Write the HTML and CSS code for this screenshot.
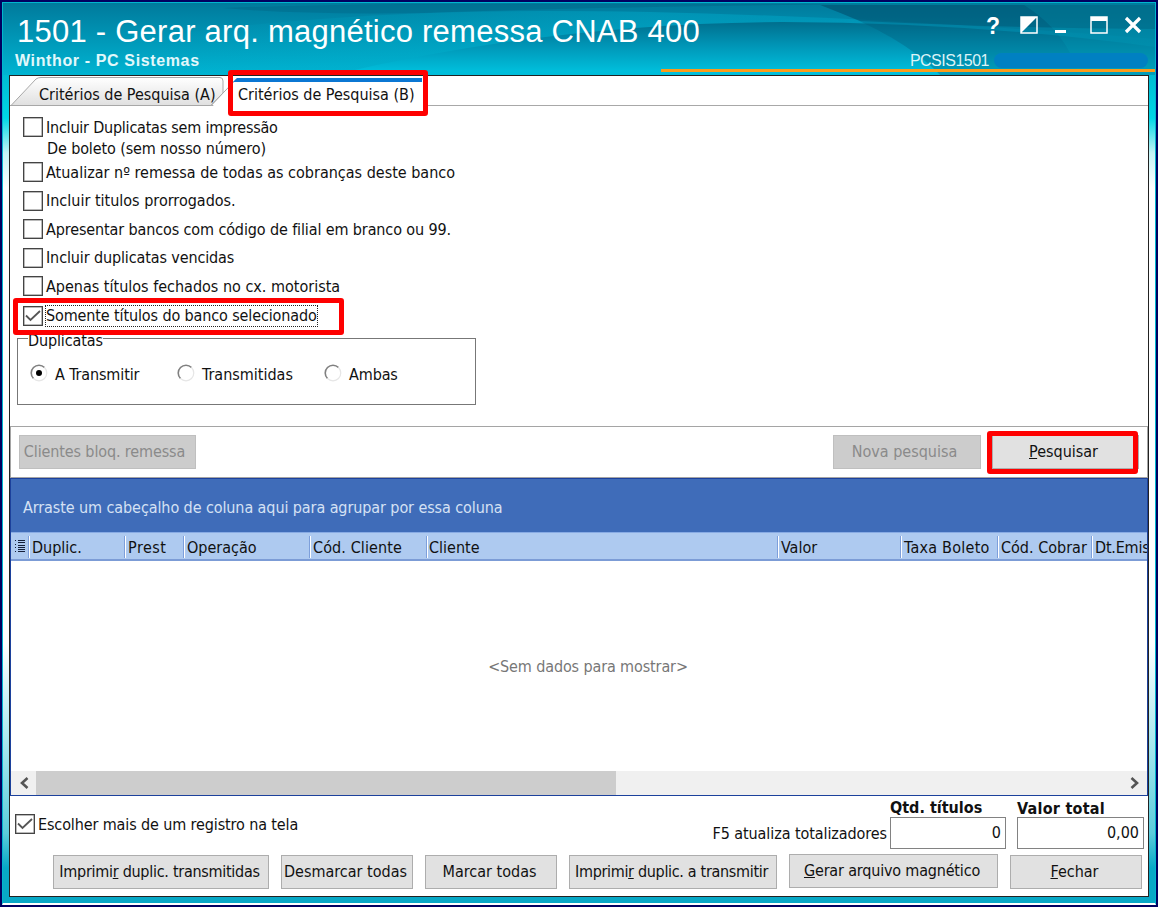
FILE: index.html
```html
<!DOCTYPE html>
<html lang="pt-BR">
<head>
  <meta charset="utf-8">
  <title>1501 - Gerar arq. magnético remessa CNAB 400</title>
  <link rel="stylesheet" href="styles.css">
</head>
<body>
  <div class="window">
    <header class="titlebar">
      <svg class="waves" width="1153" height="72" viewBox="0 0 1153 72" preserveAspectRatio="none">
        <defs>
          <linearGradient id="sky" x1="0" y1="0" x2="0" y2="1">
            <stop offset="0" stop-color="#007a9c"/>
            <stop offset="1" stop-color="#00b4d2"/>
          </linearGradient>
          <linearGradient id="shade" gradientUnits="userSpaceOnUse" x1="0" y1="18" x2="0" y2="68">
            <stop offset="0" stop-color="#006d8c"/>
            <stop offset="0.500" stop-color="#0096b7"/>
            <stop offset="1" stop-color="#00bedb"/>
          </linearGradient>
          <linearGradient id="fade" x1="0" y1="0" x2="1" y2="0">
            <stop offset="0" stop-color="#00bcd8" stop-opacity="0"/>
            <stop offset="0.500" stop-color="#00b0d0" stop-opacity="0.400"/>
            <stop offset="1" stop-color="#00a2c6" stop-opacity="0.400"/>
          </linearGradient>
        </defs>
        <rect width="1153" height="72" fill="url(#sky)"/>
        <path d="M220 5Q300 2 400 1H880Q620 3 420 10Q300 12 220 5Z" fill="#006485" opacity="0.400"/>
        <path d="M150 34Q330 8 540 8Q800 8 1153 36V72H150Z" fill="url(#fade)"/>
        <path d="M330 72Q550 20 780 19Q980 20 1153 44V72Z" fill="url(#shade)"/>
        <path d="M818 2H1153V72H938Q900 32 818 2Z" fill="#005b7c" opacity="0.350"/>
        <path d="M818 2H1153V26Q1000 25 858 18Z" fill="#004460" opacity="0.350"/>
        <path d="M1022 2Q1066 30 1076 72H1153V2Z" fill="#00a4c0" opacity="0.200"/>
      </svg>
      <div class="titles">
        <h1>1501 - Gerar arq. magnético remessa CNAB 400</h1>
        <h2>Winthor - PC Sistemas</h2>
      </div>
      <div class="title-right">
        <div class="win-buttons">
          <span class="help">?</span>
          <svg class="w-theme" width="18" height="18" viewBox="0 0 18 18"><path d="M1 1H17V17H1Z" fill="none" stroke="#fff" stroke-width="1.500"/><path d="M1 1H17L1 17Z" fill="#fff"/></svg>
          <svg class="w-min" width="12" height="18" viewBox="0 0 12 18"><path d="M0 14H11V17H0Z" fill="#fff"/></svg>
          <svg class="w-max" width="18" height="18" viewBox="0 0 18 18"><path d="M1 1H17V17H1Z" fill="none" stroke="#fff" stroke-width="1.500"/><path d="M1 1H17V5H1Z" fill="#fff"/></svg>
          <svg class="w-close" width="18" height="18" viewBox="0 0 18 18"><path d="M2 2L16 16M16 2L2 16" stroke="#fff" stroke-width="3.200"/></svg>
        </div>
        <div class="session">PCSIS1501<span class="redacted"></span></div>
      </div>
    </header>
    <div class="orange-line"></div>

    <main class="panel">
      <div class="tabs">
        <svg class="tab-art" width="420" height="30" viewBox="0 0 420 30">
          <defs>
            <linearGradient id="tab" x1="0" y1="0" x2="0" y2="1">
              <stop offset="0" stop-color="#ffffff"/>
              <stop offset="1" stop-color="#e0e0e0"/>
            </linearGradient>
          </defs>
          <path d="M1 28.500L26 2Q28 .5 31 .5H210Q213 .5 213 4V16L201 28.500Z" fill="url(#tab)" stroke="#a8a8a8"/>
          <path d="M202 30L227 1.500H413V30" fill="#fff"/>
          <path d="M201 28.500L227 1.500M413.500 2V29" fill="none" stroke="#a8a8a8"/>
          <path d="M227 1H412V5H223Z" fill="#0b77d3"/>
        </svg>
        <span class="tab tab-a">Critérios de Pesquisa (A)</span>
        <span class="tab tab-b">Critérios de Pesquisa (B)</span>
      </div>

      <section class="options">
        <label class="check first"><i class="box"></i><span class="tighter">Incluir Duplicatas sem impressão</span></label>
        <div class="second-line tight">De boleto (sem nosso número)</div>
        <label class="check"><i class="box"></i><span>Atualizar nº remessa de todas as cobranças deste banco</span></label>
        <label class="check"><i class="box"></i><span>Incluir titulos prorrogados.</span></label>
        <label class="check"><i class="box"></i><span class="tight">Apresentar bancos com código de filial em branco ou 99.</span></label>
        <label class="check"><i class="box"></i><span class="tight">Incluir duplicatas vencidas</span></label>
        <label class="check"><i class="box"></i><span>Apenas títulos fechados no cx. motorista</span></label>
        <label class="check last"><i class="box"><svg width="18" height="18" viewBox="0 0 18 18"><path d="M2 8.500L6.500 13L16 4" fill="none" stroke="#555" stroke-width="1.800"/></svg></i><span class="focused tight">Somente títulos do banco selecionado</span></label>
        <div class="group">
          <span class="legend tight">Duplicatas</span>
          <label class="radio tight"><svg width="18" height="18" viewBox="0 0 18 18"><path d="M3.500 14.500A7.500 7.500 0 0 1 14.500 3.500" fill="none" stroke="#808080" stroke-width="1.600"/><path d="M14.500 3.500A7.500 7.500 0 0 1 3.500 14.500" fill="none" stroke="#e6e6e6" stroke-width="1.200"/><circle cx="9" cy="9" r="3" fill="#000"/></svg>A Transmitir</label>
          <label class="radio"><svg width="18" height="18" viewBox="0 0 18 18"><path d="M3.500 14.500A7.500 7.500 0 0 1 14.500 3.500" fill="none" stroke="#808080" stroke-width="1.600"/><path d="M14.500 3.500A7.500 7.500 0 0 1 3.500 14.500" fill="none" stroke="#e6e6e6" stroke-width="1.200"/></svg>Transmitidas</label>
          <label class="radio tight"><svg width="18" height="18" viewBox="0 0 18 18"><path d="M3.500 14.500A7.500 7.500 0 0 1 14.500 3.500" fill="none" stroke="#808080" stroke-width="1.600"/><path d="M14.500 3.500A7.500 7.500 0 0 1 3.500 14.500" fill="none" stroke="#e6e6e6" stroke-width="1.200"/></svg>Ambas</label>
        </div>
      </section>

      <section class="toolbar">
        <button class="btn blocked tight" disabled>Clientes bloq. remessa</button>
        <button class="btn new-search" disabled>Nova pesquisa</button>
        <button class="btn search"><u>P</u>esquisar</button>
      </section>

      <section class="grid">
        <div class="group-by">Arraste um cabeçalho de coluna aqui para agrupar por essa coluna</div>
        <div class="columns">
          <span class="picker"><svg width="10" height="14" viewBox="0 0 10 14" shape-rendering="crispEdges"><path d="M0 1.500H1M0 5.500H1M0 8.500H1M0 12.500H1M3 1.500H10M3 3.500H10M3 6.500H10M3 8.500H10M3 10.500H10M3 12.500H10" stroke="#16203a"/></svg></span>
          <span class="col c-duplic">Duplic.</span>
          <span class="col c-prest">Prest</span>
          <span class="col c-oper">Operação</span>
          <span class="col c-cod">Cód. Cliente</span>
          <span class="col c-cliente">Cliente</span>
          <span class="col c-valor">Valor</span>
          <span class="col c-taxa">Taxa Boleto</span>
          <span class="col c-cobr">Cód. Cobrar</span>
          <span class="col c-dt">Dt.Emis</span>
        </div>
        <div class="no-data tight">&lt;Sem dados para mostrar&gt;</div>
        <div class="scrollbar">
          <span class="arrow"><svg width="10" height="12" viewBox="0 0 10 12"><path d="M8.500 1L3 6L8.500 11" fill="none" stroke="#555" stroke-width="2.600"/></svg></span>
          <span class="thumb"></span>
          <span class="arrow right"><svg width="10" height="12" viewBox="0 0 10 12"><path d="M1.500 1L7 6L1.500 11" fill="none" stroke="#555" stroke-width="2.600"/></svg></span>
        </div>
      </section>

      <footer class="footer">
        <div class="totals">
          <label class="check multi"><i class="box"><svg width="18" height="18" viewBox="0 0 18 18"><path d="M2 8.500L6.500 13L16 4" fill="none" stroke="#555" stroke-width="1.800"/></svg></i><span class="tight">Escolher mais de um registro na tela</span></label>
          <span class="f5">F5 atualiza totalizadores</span>
          <div class="total qty"><b>Qtd. títulos</b><div class="field">0</div></div>
          <div class="total value"><b>Valor total</b><div class="field">0,00</div></div>
        </div>
        <div class="actions">
          <button class="btn print-sent">Imprimi<u>r</u> duplic. transmitidas</button>
          <button class="btn unmark">Desmarcar todas</button>
          <button class="btn mark-all">Marcar todas</button>
          <button class="btn print-pending">Imprimi<u>r</u> duplic. a transmitir</button>
          <button class="btn generate"><u>G</u>erar arquivo magnético</button>
          <button class="btn close"><u>F</u>echar</button>
        </div>
      </footer>
    </main>
  </div>

  <div class="mark mark-tab"></div>
  <div class="mark mark-check"></div>
  <div class="mark mark-search"></div>
</body>
</html>
```
FILE: styles.css
```css
* {
  box-sizing: border-box;
}

body {
  margin: 0;
  padding: 2px;
  width: 1158px;
  height: 907px;
  overflow: hidden;
  background: #000060;
  color: #111;
  font-family: "DejaVu Sans Condensed", "DejaVu Sans", Tahoma, sans-serif;
  font-stretch: condensed;
  font-size: 16px;
}

.window {
  position: relative;
  height: 903px;
  background: linear-gradient(#00b9d2 70px, #00d6e6 115px, #c4f4f7 150px, #fff 185px, #fff 640px, #a8e8ef 740px, #5cccdc 830px, #08a8c6 865px);
  border: 1px solid #00b6cf;
  border-bottom: 2px solid #fff;
}

.tight {
  letter-spacing: -0.12px;
}

.tighter {
  letter-spacing: -0.22px;
}

/* Title bar */
.titlebar {
  position: relative;
  display: flex;
  justify-content: space-between;
  height: 72px;
  color: #fff;
  font-family: "Liberation Sans", Arial, sans-serif;
  font-stretch: normal;
}

.waves {
  position: absolute;
  left: 0;
  top: 0;
  width: 100%;
  height: 72px;
}

.titles,
.title-right {
  position: relative;
}

h1 {
  margin: 11px 0 0 14px;
  font-size: 31px;
  line-height: 36px;
  font-weight: 400;
  letter-spacing: 0.25px;
  white-space: nowrap;
}

h2 {
  margin: 2px 0 0 12px;
  font-size: 16px;
  line-height: 18px;
  letter-spacing: 0.63px;
  color: #e2f8fb;
}

.win-buttons {
  display: flex;
  justify-content: flex-end;
  height: 20px;
  margin: 13px 13px 0 0;
}

.help {
  font-size: 23px;
  line-height: 20px;
  font-weight: 700;
}

.w-theme { margin-left: 20px; }
.w-min { margin-left: 17px; }
.w-max { margin-left: 23px; }
.w-close { margin-left: 16px; }

.session {
  display: flex;
  align-items: center;
  justify-content: flex-end;
  margin: 16px 7px 0 0;
  font-size: 16px;
  line-height: 18px;
  letter-spacing: -0.5px;
  color: #dcf3f7;
}

.redacted {
  width: 154px;
  height: 15px;
  margin: -2px 0 0 5px;
  border-radius: 8px;
  background: #0080c2;
}

.orange-line {
  position: absolute;
  left: 658px;
  right: 0;
  top: 66px;
  height: 3px;
  background: #fb9b1a;
}

.panel {
  display: flex;
  flex-direction: column;
  height: 822px;
  margin: 0 6px 0 6px;
  border: 1px solid #222;
  background: #fff;
}

.panel > * {
  flex: none;
}

/* Tabs */
.tabs {
  position: relative;
  height: 30px;
  border-bottom: 1px solid #a8a8a8;
}

.tab-art {
  position: absolute;
  left: 0;
  top: 1px;
}

.tab {
  position: absolute;
  top: 9px;
  line-height: 20px;
  white-space: nowrap;
}

.tab-a { left: 29px; }
.tab-b { left: 228px; }

/* Search options */
.options {
  height: 320px;
  padding: 11px 0 0 13px;
}

.check {
  display: flex;
  align-items: center;
  height: 28.5px;
  white-space: nowrap;
}

.check.first { height: 20px; }
.check.last { height: 31px; }

.second-line {
  height: 21px;
  padding-left: 24px;
  line-height: 23px;
}

.box {
  width: 20px;
  height: 20px;
  margin-right: 3px;
  border: 1px solid #444;
  box-shadow: inset 0 0 0 0.5px #777;
}

.box svg {
  display: block;
}

.focused {
  outline: 1px dotted #222;
  line-height: 20px;
}

.group {
  position: relative;
  display: flex;
  width: 459px;
  height: 67px;
  margin: 6px 0 0 -6px;
  padding: 7px 0 0 12px;
  border: 1px solid #777;
}

.legend {
  position: absolute;
  left: 10px;
  top: -8px;
  line-height: 20px;
  background: #fff;
}

.radio {
  display: flex;
  align-items: center;
  width: 147px;
}

.radio svg {
  margin: -3px 7px 0 0;
}

/* Buttons */
.toolbar {
  display: flex;
  align-items: center;
  height: 52px;
  padding: 0 8px;
  border: 1px solid #a5a5a5;
}

.btn {
  height: 34px;
  padding: 0 3px 2px 0;
  border: 1px solid #adadad;
  background: #e1e1e1;
  color: #111;
  font: inherit;
  white-space: nowrap;
}

.btn:disabled {
  background: #ccc;
  border-color: #bfbfbf;
  color: #8a8a8a;
}

.blocked { width: 177px; padding-right: 6px; }
.new-search { width: 148px; margin-left: auto; padding-right: 5px; }
.search { width: 147px; margin-left: 11px; padding-right: 4px; }

/* Grid */
.grid {
  display: flex;
  flex-direction: column;
  height: 318px;
  border: 1px solid #1c419c;
}

.group-by {
  height: 53px;
  padding-left: 12px;
  line-height: 57px;
  letter-spacing: -0.09px;
  background: #3f6cb9;
  color: #d5e1f4;
}

.columns {
  display: flex;
  height: 29px;
  padding-top: 3px;
  border-top: 1px solid #88abe4;
  border-bottom: 2px solid #7c9cd6;
  background: #aecaf0;
  overflow: hidden;
}

.picker {
  width: 17px;
  padding: 2px 0 0 4px;
}

.col {
  flex: none;
  height: 22px;
  padding-left: 3px;
  border-left: 1px solid #7d9fdb;
  box-shadow: inset 1px 0 #fff;
  line-height: 23px;
  white-space: nowrap;
}

.c-duplic { width: 96px; }
.c-prest { width: 59px; letter-spacing: 0.5px; }
.c-oper { width: 126px; }
.c-cod { width: 117px; letter-spacing: 0.1px; }
.c-cliente { width: 351px; padding-left: 2px; }
.c-valor { width: 123px; }
.c-taxa { width: 97px; letter-spacing: 0.25px; }
.c-cobr { width: 94px; }
.c-dt { width: 56px; letter-spacing: -0.2px; }

.no-data {
  flex: 1;
  display: flex;
  align-items: center;
  justify-content: center;
  padding-left: 18px;
  color: #777;
}

.scrollbar {
  display: flex;
  height: 24px;
  background: #f0f0f0;
}

.arrow {
  display: flex;
  align-items: center;
  justify-content: center;
  width: 25px;
}

.arrow.right { margin-left: auto; }

.thumb {
  width: 580px;
  background: #cdcdcd;
}

/* Footer */
.totals {
  display: flex;
  height: 53px;
  padding-left: 5px;
  white-space: nowrap;
}

.multi { margin-top: 14px; }

.f5 {
  margin: 28px 3px 0 auto;
  line-height: 20px;
  letter-spacing: -0.08px;
}

.total b {
  display: block;
  height: 21px;
  line-height: 23px;
}

.value b {
  line-height: 25px;
  letter-spacing: 0.25px;
}

.qty { width: 116px; }
.value { width: 127px; margin: 0 4px 0 11px; }

.field {
  height: 32px;
  padding-right: 4px;
  border: 1px solid #828282;
  line-height: 30px;
  text-align: right;
}

.actions {
  display: flex;
  gap: 12px;
  padding: 6px 0 0 43px;
}

.print-sent { width: 216px; letter-spacing: -0.28px; }
.unmark { width: 132px; }
.mark-all { width: 132px; }
.print-pending { width: 208px; letter-spacing: -0.32px; }
.generate { width: 209px; margin-top: -1px; letter-spacing: -0.18px; }
.close { width: 132px; }

/* Highlights */
.mark {
  position: absolute;
  border: 5px solid #fe0000;
  border-radius: 3px;
}

.mark-tab { left: 228px; top: 70px; width: 200px; height: 46px; }
.mark-check { left: 13px; top: 298px; width: 331px; height: 37px; }
.mark-search { left: 987px; top: 431px; width: 151px; height: 43px; }
```
